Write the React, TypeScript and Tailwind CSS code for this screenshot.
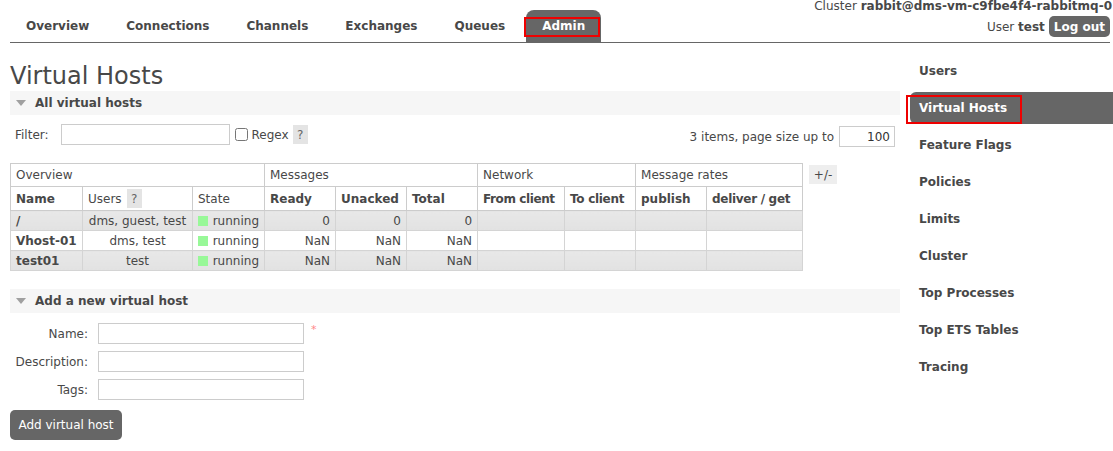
import React from "react";

const navItems = ["Overview", "Connections", "Channels", "Exchanges", "Queues", "Admin"];
const sideItems = [
  "Users",
  "Virtual Hosts",
  "Feature Flags",
  "Policies",
  "Limits",
  "Cluster",
  "Top Processes",
  "Top ETS Tables",
  "Tracing",
];

const rows = [
  { name: "/", users: "dms, guest, test", ready: "0", unacked: "0", total: "0" },
  { name: "Vhost-01", users: "dms, test", ready: "NaN", unacked: "NaN", total: "NaN" },
  { name: "test01", users: "test", ready: "NaN", unacked: "NaN", total: "NaN" },
];

function Triangle() {
  return (
    <svg width="10" height="6" viewBox="0 0 10 6" className="mr-[9px]">
      <path d="M0 0 L10 0 L5 6 Z" fill="#a0a0a0" />
    </svg>
  );
}

function SectionHeader({ title }: { title: string }) {
  return (
    <div className="flex h-[24px] items-center bg-[#f6f6f6] pl-[6px] text-[12px] font-bold text-[#484848]">
      <Triangle />
      {title}
    </div>
  );
}

function Help() {
  return (
    <span className="inline-flex h-[19px] w-[15px] items-center justify-center bg-[#e4e4e4] text-[12px] font-normal text-[#666]">
      ?
    </span>
  );
}

export default function App() {
  const th = "whitespace-nowrap border border-[#ccc] px-[5px] text-left";
  return (
    <div className="h-[451px] w-[1113px] overflow-hidden bg-white font-['DejaVu_Sans',sans-serif] text-[12px] text-[#484848]">
      {/* Header */}
      <div className="ml-[10px] flex w-[1100px] items-end justify-between border-b border-[#666]">
        <ul className="flex gap-[5px]">
          {navItems.map((item) => (
            <li
              key={item}
              className={
                item === "Admin"
                  ? "relative flex h-[32px] items-center rounded-t-[8px] bg-[#666] px-4 font-bold text-white"
                  : "flex h-[32px] items-center px-4 font-bold text-[#484848]"
              }
            >
              {item}
              {item === "Admin" ? (
                <span className="absolute bottom-[5px] left-[-2px] right-[1px] top-[7px] border-2 border-[#e00]" />
              ) : null}
            </li>
          ))}
        </ul>
        <div className="-mr-[2px] flex h-[42px] flex-col items-end">
          <div className="whitespace-nowrap leading-[13px]">
            Cluster <b>rabbit@dms-vm-c9fbe4f4-rabbitmq-0</b>
          </div>
          <div className="mr-[2px] mt-[3px] flex items-center">
            <span>
              User <b>test</b>
            </span>
            <span className="ml-[4px] flex h-[21px] items-center rounded-[5px] bg-[#666] px-[5px] font-bold text-white">
              Log out
            </span>
          </div>
        </div>
      </div>

      <div className="flex">
        {/* Main */}
        <div className="ml-[10px] w-[890px]">
          <h1 className="mt-[19px] text-[24px] font-normal leading-[29px] text-[#484848]">Virtual Hosts</h1>
          <SectionHeader title="All virtual hosts" />

          <div className="mt-[9px] flex items-start justify-between">
            <div className="flex items-center">
              <span className="ml-[5px]">Filter:</span>
              <input className="ml-[12px] h-[21px] w-[169px] border border-[#ccc] bg-white outline-none" />
              <input type="checkbox" className="ml-[5px] h-[13px] w-[13px]" />
              <span className="ml-[4px]">Regex</span>
              <span className="ml-[4px]">
                <Help />
              </span>
            </div>
            <div className="mr-[5px] mt-[2px] flex items-center">
              <span>3 items, page size up to</span>
              <div className="ml-[5px] flex h-[21px] w-[56px] items-center justify-end border border-[#ccc] pr-[4px] text-[#333]">
                100
              </div>
            </div>
          </div>

          <div className="mt-[16px] flex items-start">
            <table className="w-[792px] table-fixed border-collapse text-[12px]">
              <colgroup>
                <col className="w-[72px]" />
                <col className="w-[110px]" />
                <col className="w-[72px]" />
                <col className="w-[71px]" />
                <col className="w-[71px]" />
                <col className="w-[71px]" />
                <col className="w-[87px]" />
                <col className="w-[71px]" />
                <col className="w-[71px]" />
                <col className="w-[96px]" />
              </colgroup>
              <thead>
                <tr className="h-[23px]">
                  <th colSpan={3} className={th + " font-normal"}>
                    Overview
                  </th>
                  <th colSpan={3} className={th + " font-normal"}>
                    Messages
                  </th>
                  <th colSpan={2} className={th + " font-normal"}>
                    Network
                  </th>
                  <th colSpan={2} className={th + " font-normal"}>
                    Message rates
                  </th>
                </tr>
                <tr className="h-[24px]">
                  <th className={th + " font-bold"}>Name</th>
                  <th className={th + " font-normal"}>
                    <span className="flex items-center gap-[5px]">
                      Users <Help />
                    </span>
                  </th>
                  <th className={th + " font-normal"}>State</th>
                  <th className={th + " font-bold"}>Ready</th>
                  <th className={th + " font-bold"}>Unacked</th>
                  <th className={th + " font-bold"}>Total</th>
                  <th className={th + " font-bold tracking-[-0.4px]"}>From client</th>
                  <th className={th + " font-bold tracking-[-0.3px]"}>To client</th>
                  <th className={th + " font-bold"}>publish</th>
                  <th className={th + " font-bold tracking-[-0.3px]"}>deliver / get</th>
                </tr>
              </thead>
              <tbody>
                {rows.map((r, i) => {
                  const cell =
                    i % 2 === 0
                      ? "whitespace-nowrap border border-[#d4d4d4] bg-gradient-to-b from-[#e8e8e8] to-[#e2e2e2] px-[5px] leading-[18px]"
                      : "whitespace-nowrap border border-[#d4d4d4] bg-white px-[5px] leading-[18px]";
                  return (
                    <tr key={r.name} className="h-[20px]">
                      <td className={cell + " font-bold"}>{r.name}</td>
                      <td className={cell + " text-center"}>{r.users}</td>
                      <td className={cell}>
                        <span className="flex items-center">
                          <span className="mr-[5px] inline-block h-[10px] w-[10px] bg-[#98f898]" />
                          running
                        </span>
                      </td>
                      <td className={cell + " text-right"}>{r.ready}</td>
                      <td className={cell + " text-right"}>{r.unacked}</td>
                      <td className={cell + " text-right"}>{r.total}</td>
                      <td className={cell}></td>
                      <td className={cell}></td>
                      <td className={cell}></td>
                      <td className={cell}></td>
                    </tr>
                  );
                })}
              </tbody>
            </table>
            <span className="ml-[6px] mt-[2px] flex h-[19px] w-[28px] items-center justify-center bg-[#eee] text-[#484848]">
              +/-
            </span>
          </div>

          <div className="mt-[18px]">
            <SectionHeader title="Add a new virtual host" />
          </div>

          <div className="mt-[10px] flex flex-col gap-[7px]">
            {["Name:", "Description:", "Tags:"].map((label) => (
              <div key={label} className="flex items-center">
                <span className="w-[78px] text-right">{label}</span>
                <input className="ml-[10px] h-[21px] w-[206px] border border-[#ccc] bg-white outline-none" />
                {label === "Name:" ? (
                  <span className="ml-[7px] self-start text-[11px] leading-[14px] text-[#f88]">*</span>
                ) : null}
              </div>
            ))}
          </div>

          <button
            type="button"
            className="mt-[10px] flex h-[30px] w-[112px] items-center justify-center rounded-[5px] bg-[#666] text-[12px] text-white"
          >
            Add virtual host
          </button>
        </div>

        {/* Sidebar */}
        <ul className="ml-[10px] mt-[12px] w-[203px]">
          {sideItems.map((item) => (
            <li
              key={item}
              className={
                item === "Virtual Hosts"
                  ? "relative mb-[5px] flex h-[32px] items-center rounded-l-[6px] bg-[#666] pl-[9px] font-bold text-white"
                  : "mb-[5px] flex h-[32px] items-center pl-[9px] font-bold text-[#484848]"
              }
            >
              {item}
              {item === "Virtual Hosts" ? (
                <span className="absolute bottom-[0px] left-[-4px] top-[3px] w-[116px] border-2 border-[#e00]" />
              ) : null}
            </li>
          ))}
        </ul>
      </div>
    </div>
  );
}
